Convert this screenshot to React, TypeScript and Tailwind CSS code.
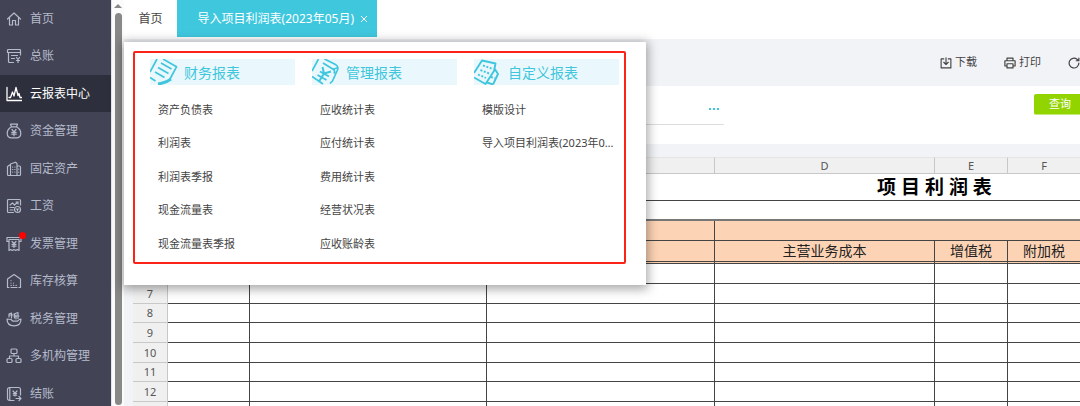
import type { ReactNode } from 'react'
import clsx from 'clsx'

const Icon = ({ children, className = 'size-4' }: { children: ReactNode; className?: string }) => (
  <svg
    viewBox="0 0 16 16"
    fill="none"
    stroke="currentColor"
    strokeWidth="1.2"
    strokeLinecap="round"
    strokeLinejoin="round"
    aria-hidden="true"
    className={`shrink-0 ${className}`}
  >
    {children}
  </svg>
)

const navItems: { label: string; icon: ReactNode; active?: boolean; dot?: boolean }[] = [
  { label: '首页', icon: <path d="M1.500 8 8 2l6.500 6M3.500 7v7h3V9.500h3V14h3V7" /> },
  {
    label: '总账',
    icon: (
      <>
        <path d="M7.500 14.500h-4a1 1 0 0 1-1-1v-9M14.500 7V2.500a1 1 0 0 0-1-1h-11a1 1 0 0 0-1 1v2h13M5.500 7.500h6M5.500 10.500h3" />
        <path d="m10.500 9.500 1.500 2 1.500-2M12 11.500v3M10.500 12.500h3" />
      </>
    ),
  },
  {
    label: '云报表中心',
    icon: <path strokeWidth="1.3" d="M1 1.500v13h14.500M3 11.500h1.500L6.500 6l1.500 4L10 1.500l2 8 1-2 1 4h1.500" />,
    active: true,
  },
  {
    label: '资金管理',
    icon: (
      <>
        <path d="M5.500 3.800 4.500 1.200h7l-1 2.600M5.500 3.800h5M5.500 3.800C2.500 5.500 1.200 8 1.200 10.500c0 2.800 1.800 4.300 4.300 4.300h5c2.500 0 4.300-1.500 4.300-4.300 0-2.500-1.300-5-4.300-6.700" />
        <path d="m6 6.500 2 2.300 2-2.300M8 8.800v4M5.800 9.300h4.400M5.800 11.200h4.400" />
      </>
    ),
  },
  {
    label: '固定资产',
    icon: (
      <>
        <path d="M4.500 14.500h-2a1 1 0 0 1-1-1V5.500l3-2M4.500 14.500V3l5-1.800 1.500 1.300v12zM11 5h2.500a1 1 0 0 1 1 1v7.500a1 1 0 0 1-1 1H11" />
        <path d="M6.500 6h.2M8.800 6H9M6.500 8.500h.2M8.800 8.500H9M6.500 11h.2M8.800 11H9M12.700 8v.2M12.700 11v.2" />
      </>
    ),
  },
  {
    label: '工资',
    icon: (
      <>
        <path d="M7.500 14.500h-5a1 1 0 0 1-1-1v-11a1 1 0 0 1 1-1h11a1 1 0 0 1 1 1V7M4 7l2.500-2 2 2L12 4M10 4h2v2M4 9.500h4M4 12h3" />
        <circle cx="11.500" cy="11.500" r="3" />
        <path d="M10.300 11h2.400M11.500 11v2" />
      </>
    ),
  },
  {
    label: '发票管理',
    icon: (
      <path d="M3 5.500H1v-4h14v4h-2M3 3.500h10v11l-1.700-1-1.600 1L8 13.500l-1.700 1-1.600-1-1.700 1zM6 5.500l2 2 2-2M8 7.500v4M6 8.300h4M6 10.200h4" />
    ),
    dot: true,
  },
  {
    label: '库存核算',
    icon: (
      <path d="M3 14.500H1.500V6L8 1.500 14.500 6v8.500H13M5 7.500v.1M5 10v.1M7.500 10v.1M5 12.300h.3M7.500 12.300h.3M10 12.300h.3M5 14.500h6" />
    ),
  },
  {
    label: '税务管理',
    icon: (
      <>
        <path d="M1 8c0 4 2.500 6.800 7 6.800S15 12 15 8c-1.800 0-2.500 1-3.500 2.200H7L5 8.500z" />
        <path d="M3 6V3l2.500-1M5.500 2v5M3 4h4M8 3l4-1.500M8.500 3v4M12 2v5.500M10 4v4M8 5h5" />
      </>
    ),
  },
  {
    label: '多机构管理',
    icon: (
      <>
        <rect x="5" y="1" width="6" height="4.500" rx="1" />
        <rect x="1" y="10.500" width="5" height="4" rx="1" />
        <rect x="10" y="10.500" width="5" height="4" rx="1" />
        <path d="M8 5.500V8M3.500 10.500V8h9v2.500" />
      </>
    ),
  },
  {
    label: '结账',
    icon: (
      <>
        <path d="M8 14.500H3.500a2 2 0 0 1-2-2v-9a2 2 0 0 1 2-2h9a2 2 0 0 1 2 2V9M3.800 2v12M10 12.500h5M13 10.500l2 2-2 2" />
        <path d="M7 5l2 2.200L11 5M9 7.200V10M7.300 7.500h3.400M7.300 9.200h3.400" />
      </>
    ),
  },
]

const MenuIcon = ({ children }: { children: ReactNode }) => (
  <svg
    viewBox="0 0 28 26"
    fill="none"
    stroke="currentColor"
    strokeWidth="1.700"
    strokeLinejoin="round"
    aria-hidden="true"
    className="h-[26px] w-7 shrink-0"
  >
    {children}
  </svg>
)

const menuGroups: { title: string; icon: ReactNode; items: string[] }[] = [
  {
    title: '财务报表',
    icon: (
      <>
        <path d="M7 0 0 13M13 0l13.500 7.800L20 20M11 4l10.500 6M8 8.500l10.500 6M5 13l9.500 5.500M0 18.500l5.500 3.500" />
        <path d="M8 25c4-.5 9-2 13-5" strokeWidth="3" />
      </>
    ),
    items: ['资产负债表', '利润表', '利润表季报', '现金流量表', '现金流量表季报'],
  },
  {
    title: '管理报表',
    icon: (
      <>
        <path d="M6.500 0 0 12M11 4l10.500 6.500c1.500 1 1.500 2 .5 4M12.500 0l11 5.500c2.500 1.500 3 3 2 5.500L20.500 22l-2.500 2.500M21 10l5-1M0 17.500 11 25" />
        <path d="m10.500 8 1.500 6.500 7-2M12 14.500 7 22.500M8 12.500l9 5M5.500 16l9 5" strokeWidth="2" />
      </>
    ),
    items: ['应收统计表', '应付统计表', '费用统计表', '经营状况表', '应收账龄表'],
  },
  {
    title: '自定义报表',
    icon: (
      <>
        <path d="M0 14 8 1.500l13.500 3L20 12l-8.500 13L0 18.500M20.500 9.500 24 15l-5 10.500M13 23.500l6 2" strokeWidth="1.900" />
        <path d="m9 6.500 8.500 3M6.500 11l8.500 3.500M4 15.500l8 3.500M17 18l4 1.500" strokeWidth="1.900" strokeDasharray="2 1.600" />
      </>
    ),
    items: ['模版设计', '导入项目利润表(2023年05月)'],
  },
]

const Sidebar = () => (
  <nav className="w-[111px] shrink-0 overflow-hidden bg-[#434356]">
    <ul>
      {navItems.map((item) => (
        <li key={item.label} className="odd:h-[37px] even:h-[38px]">
          <a
            href="#"
            className={clsx(
              'flex h-full items-center gap-2 pl-1.5 text-[12px]',
              item.active ? 'bg-[#2d303c] text-white' : 'text-[#b4bbca]',
            )}
          >
            <span className="relative">
              <Icon>{item.icon}</Icon>
              {item.dot && <i className="absolute -top-1 -right-1 size-[7px] rounded-full bg-[#ff0000]" />}
            </span>
            {item.label}
          </a>
        </li>
      ))}
    </ul>
  </nav>
)

const Scrollbar = () => (
  <div className="flex w-[13px] shrink-0 flex-col items-center gap-[5px] border-l border-[#e4e4e8] bg-[#fbfbfb] pt-1 pb-px">
    <svg viewBox="0 0 8 4" className="h-1 w-2 shrink-0" aria-hidden="true">
      <path d="M4 0 8 4H0z" fill="#888" />
    </svg>
    <div className="w-[7px] flex-1 rounded-full bg-[#888888]" />
  </div>
)

const ReportMenu = () => (
  <div className="absolute top-[42px] left-0 z-10 w-[522px] bg-white px-[9px] pt-[9px] pb-[21px] shadow-[0_2px_10px_2px_rgba(0,0,0,0.35)]">
    <div className="mr-[11px] grid grid-cols-[145px_145px_145px] gap-[17px] rounded-[2px] border-2 border-[#fb2217] pt-1.5 pb-0.5 pl-[15px]">
      {menuGroups.map((group) => (
        <section key={group.title}>
          <h2 className="mb-2 flex h-[26px] items-center gap-1.5 bg-[#eaf8fd] text-[14px] text-[#3fc6dc]">
            <MenuIcon>{group.icon}</MenuIcon>
            {group.title}
          </h2>
          <ul className="pl-2 text-[11px] text-[#444444]">
            {group.items.map((item) => (
              <li key={item} className="odd:h-[33px] even:h-[34px]">
                <a href="#" className="block truncate leading-[33px]">
                  {item}
                </a>
              </li>
            ))}
          </ul>
        </section>
      ))}
    </div>
  </div>
)

const Tabs = () => (
  <div className="flex h-[39px] items-start bg-white text-[12px]">
    <button type="button" className="h-[37px] w-[53px] text-[#444444]">
      首页
    </button>
    <div className="flex h-[37px] w-[200px] items-center justify-end gap-[5px] bg-[#3fc7de] pr-2 text-white">
      <button type="button">导入项目利润表(2023年05月)</button>
      <button type="button" aria-label="关闭">
        <svg viewBox="0 0 10 10" className="size-2.5" stroke="currentColor" aria-hidden="true">
          <path d="m2 2 6 6M8 2 2 8" />
        </svg>
      </button>
    </div>
  </div>
)

const Toolbar = () => (
  <div className="flex h-[47px] items-center justify-end gap-[27px] bg-[#f2f3f6] text-[11px] text-[#444444]">
    <button type="button" className="flex items-center gap-[3px]">
      <Icon className="size-3">
        <path strokeWidth="1.500" d="M5 2.500H1.500v12h13v-12H11M8 1v8.500M5 7l3 3 3-3" />
      </Icon>
      下载
    </button>
    <button type="button" className="flex items-center gap-[3px]">
      <Icon className="size-3">
        <path strokeWidth="1.600" d="M4 5V1.500h8V5M4 12H1.200V5h13.600v7H12M4 9h8v5.500H4z" />
      </Icon>
      打印
    </button>
    <button type="button" aria-label="刷新">
      <Icon className="size-3">
        <path strokeWidth="1.600" d="M14.500 8A6.500 6.500 0 1 1 12 3l2 1.500M14.500 1.500v3.500H11" />
      </Icon>
    </button>
  </div>
)

const Filters = () => (
  <div className="flex h-[58px] items-start justify-between bg-white pt-2">
    <div className="ml-[420px] flex h-[31px] w-[180px] items-center border-b border-[#dddddd] pr-[5px]">
      <input aria-label="项目" className="min-w-0 flex-1 outline-none" />
      <button type="button" aria-label="选择项目" className="text-[#3fc7de]">
        <svg viewBox="0 0 10 2" className="h-0.5 w-2.5" fill="currentColor" aria-hidden="true">
          <path d="M0 0h2v2H0zM4 0h2v2H4zM8 0h2v2H8z" />
        </svg>
      </button>
    </div>
    <button
      type="button"
      className="h-[21px] w-[46px] rounded-l-[2px] border-b border-[#c4ea7a] bg-[#92d400] pl-1.5 text-[11px] text-white"
    >
      查询
    </button>
  </div>
)

const columnNames = ['', '', '', '', 'D', 'E', 'F', '']
const costLabels = ['', '', '', '主营业务成本', '增值税', '附加税', '']
const bodyRows = ['', '7', '8', '9', '10', '11', '12', '']

const RowNumber = ({ children }: { children?: ReactNode }) => (
  <th scope="row" className="border-r border-b border-[#c8c8c8] bg-[#f0f0f0] p-0 text-[11px] font-normal text-[#555555]">
    {children}
  </th>
)

const Sheet = () => (
  <div className="min-h-0 flex-1 overflow-hidden bg-[#f2f3f6] pt-[13px] pl-[9px]">
    <table className="w-[1568px] table-fixed border-separate border-spacing-0 bg-white text-[14px] leading-4 text-[#222222]">
      <colgroup>
        <col className="w-[35px]" />
        <col className="w-[82px]" />
        <col className="w-[237px]" />
        <col className="w-[228px]" />
        <col className="w-[220px]" />
        <col className="w-[73px]" />
        <col className="w-[73px]" />
        <col />
      </colgroup>
      <thead>
        <tr className="h-[17px] bg-[#f0f0f0] text-[11px] leading-[15px] text-[#555555]">
          {columnNames.map((name, i) => (
            <th key={i} className="border-t border-r border-b border-[#c8c8c8] border-t-[#e4e4e4] p-0 font-normal">
              {name}
            </th>
          ))}
        </tr>
      </thead>
      <tbody>
        <tr className="h-[27px]">
          <RowNumber />
          <td colSpan={7} className="border-b border-[#444444] p-0 text-center text-[19px] leading-6 font-bold text-black">
            项 目 利 润 表
          </td>
        </tr>
        <tr className="h-5">
          <RowNumber />
          <td colSpan={7} className="border-b-2 border-[#777777] p-0" />
        </tr>
        <tr className="h-5 bg-[#fcd3b4]">
          <RowNumber />
          <td colSpan={3} className="border-r border-b border-[#444444] p-0" />
          <td colSpan={4} className="border-b border-[#444444] p-0" />
        </tr>
        <tr className="h-[23px] bg-[#fcd3b4] text-center">
          <RowNumber />
          {costLabels.map((label, i) => (
            <td key={i} className="border-r border-b-3 border-[#444444] p-0 [border-bottom-style:double]">
              {label}
            </td>
          ))}
        </tr>
        {bodyRows.map((row, i) => (
          <tr key={i} className="h-5 nth-[3n+1]:h-[19px]">
            <RowNumber>{row}</RowNumber>
            {costLabels.map((_, col) => (
              <td key={col} className="border-r border-b border-[#444444] p-0" />
            ))}
          </tr>
        ))}
      </tbody>
    </table>
  </div>
)

export default function App() {
  return (
    <div className="flex h-screen overflow-hidden bg-[#f2f3f6] font-['Noto_Sans','Noto_Sans_CJK_SC',sans-serif]">
      <Sidebar />
      <Scrollbar />
      <main className="relative flex min-w-0 flex-1 flex-col">
        <Tabs />
        <ReportMenu />
        <Toolbar />
        <Filters />
        <Sheet />
      </main>
    </div>
  )
}
